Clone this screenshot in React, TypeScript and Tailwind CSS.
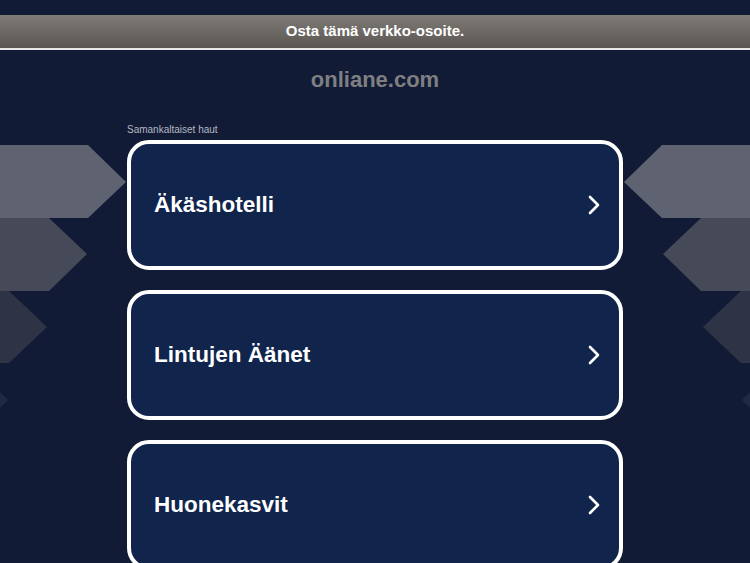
const searches = ['Äkäshotelli', 'Lintujen Äänet', 'Huonekasvit'];

const Chevron = () => (
    <svg width="14" height="20" viewBox="0 0 14 20" fill="none" className="shrink-0">
        <path d="M3 2 L11 10 L3 18" stroke="white" strokeWidth="2.6" strokeLinecap="round" strokeLinejoin="round" />
    </svg>
);

const Arrows = ({ side }: { side: 'left' | 'right' }) => (
    <svg
        width="140"
        height="300"
        viewBox="0 140 140 300"
        className={`absolute top-[140px] ${side === 'left' ? 'left-0' : 'right-0 -scale-x-100'}`}
    >
        <polygon points="0,145 88,145 126,182 88,218 0,218" fill="#5f6271" />
        <polygon points="0,218 49,218 87,254 49,291 0,291" fill="#464958" />
        <polygon points="0,291 9,291 47,327 9,363 0,363" fill="#2f3346" />
        <polygon points="-30,363 8,400 -30,437" fill="#202942" />
    </svg>
);

export default function App() {
    return (
        <div className="relative h-[563px] w-full overflow-hidden bg-[#111b35] pt-[15px] font-['Liberation_Sans',Arial,sans-serif]">
            <Arrows side="left" />
            <Arrows side="right" />

            <div className="flex h-[35px] items-center justify-center border-b-2 border-[#e8e8e8] bg-gradient-to-b from-[#7e7b77] to-[#5b5651]">
                <span className="text-[15px] font-bold text-white">Osta tämä verkko-osoite.</span>
            </div>

            <h1 className="mt-[17px] text-center text-[22px] font-bold leading-[26px] text-[#7f7f82]">onliane.com</h1>

            <div className="relative mx-auto mt-[30px] w-[496px]">
                <p className="text-[10px] leading-[14px] text-[#b4b8c4]">Samankaltaiset haut</p>
                <div className="mt-[3px] flex flex-col gap-[20px]">
                    {searches.map((s) => (
                        <a
                            key={s}
                            href="#"
                            className="flex h-[130px] items-center justify-between rounded-[22px] border-4 border-white bg-[#10244c] pl-[23px] pr-[18px]"
                        >
                            <span className="text-[22.5px] font-bold text-white">{s}</span>
                            <Chevron />
                        </a>
                    ))}
                </div>
            </div>
        </div>
    );
}
